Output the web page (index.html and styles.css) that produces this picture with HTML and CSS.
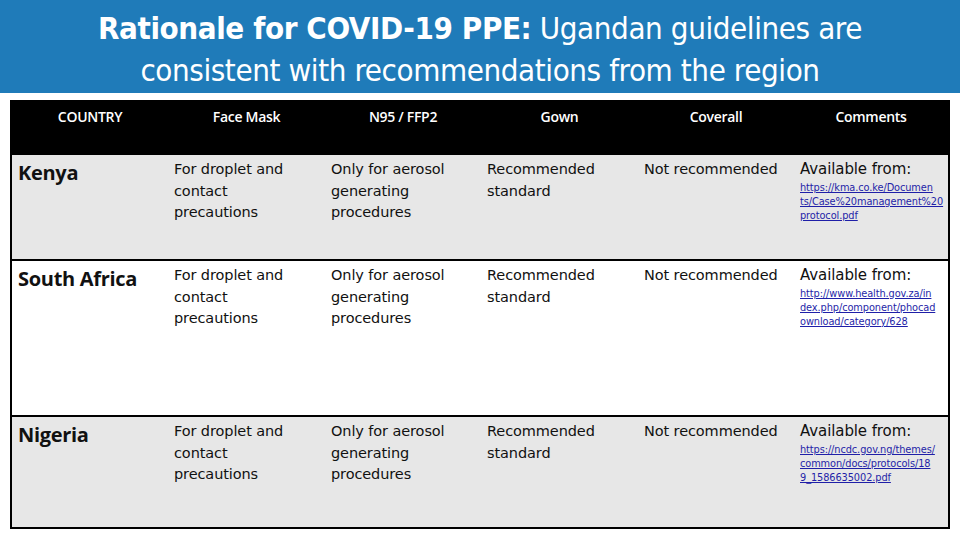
FILE: index.html
```html
<!DOCTYPE html>
<html>
<head>
<meta charset="utf-8">
<link rel="stylesheet" href="styles.css">
</head>
<body>
<header class="title-bar">
  <h1><b>Rationale for COVID-19 PPE:</b> Ugandan guidelines are<br>consistent with recommendations from the region</h1>
</header>
<main class="table">
  <div class="row head">
    <div class="cell">COUNTRY</div>
    <div class="cell">Face Mask</div>
    <div class="cell">N95 / FFP2</div>
    <div class="cell">Gown</div>
    <div class="cell">Coverall</div>
    <div class="cell">Comments</div>
  </div>
  <div class="row shade r1">
    <div class="cell country">Kenya</div>
    <div class="cell mask">For droplet and contact precautions</div>
    <div class="cell">Only for aerosol generating procedures</div>
    <div class="cell">Recommended standard</div>
    <div class="cell">Not recommended</div>
    <div class="cell comment">Available from:<a class="link">https://kma.co.ke/Documen<br>ts/Case%20management%20<br>protocol.pdf</a></div>
  </div>
  <div class="row r2">
    <div class="cell country">South Africa</div>
    <div class="cell mask">For droplet and contact precautions</div>
    <div class="cell">Only for aerosol generating procedures</div>
    <div class="cell">Recommended standard</div>
    <div class="cell">Not recommended</div>
    <div class="cell comment">Available from:<a class="link">http://www.health.gov.za/in<br>dex.php/component/phocad<br>ownload/category/628</a></div>
  </div>
  <div class="row shade r3">
    <div class="cell country">Nigeria</div>
    <div class="cell mask">For droplet and contact precautions</div>
    <div class="cell">Only for aerosol generating procedures</div>
    <div class="cell">Recommended standard</div>
    <div class="cell">Not recommended</div>
    <div class="cell comment">Available from:<a class="link">https://ncdc.gov.ng/themes/<br>common/docs/protocols/18<br>9_1586635002.pdf</a></div>
  </div>
</main>
</body>
</html>
```
FILE: styles.css
```css
html, body {
  margin: 0;
  padding: 0;
  background: #ffffff;
  width: 960px;
  height: 540px;
  overflow: hidden;
}
.title-bar {
  background: #1f7bb9;
  height: 93px;
  display: flex;
  align-items: center;
  justify-content: center;
}
.title-bar h1 {
  margin: 0;
  color: #ffffff;
  font-family: "DejaVu Sans Condensed", "Open Sans", sans-serif;
  font-stretch: condensed;
  font-weight: normal;
  font-size: 31px;
  line-height: 42px;
  text-align: center;
  letter-spacing: -0.4px;
  transform: translateY(2px);
}
.title-bar h1 b {
  font-weight: bold;
}
.table {
  margin: 7px 10px 0 10px;
  width: 936px;
  border: 2px solid #000;
  font-family: "DejaVu Sans", sans-serif;
}
.row {
  display: grid;
  grid-template-columns: 156px 157px 156px 157px 156px 154px;
}
.row + .row {
  border-top: 2px solid #000;
}
.head {
  background: #000;
  height: 51px;
}
.head .cell {
  color: #fff;
  text-align: center;
  font-family: "Open Sans", sans-serif;
  font-weight: 600;
  font-size: 14px;
  padding: 4px 0 0 0;
  letter-spacing: -0.3px;
}
.shade { background: #e7e7e7; }
.r1 { height: 104px; }
.r2 { height: 154px; }
.r3 { height: 110px; }
.cell {
  padding: 4px 4px 0 6px;
  font-size: 14.5px;
  line-height: 21.5px;
  color: #111;
  letter-spacing: -0.1px;
}
.mask {
  padding-right: 22px;
}
.country {
  font-size: 20px;
  font-weight: bold;
  font-family: "Open Sans", sans-serif;
  line-height: 28px;
  padding-top: 4px;
  letter-spacing: -0.3px;
}
.comment {
  font-size: 15px;
  padding-right: 2px;
}
.link {
  display: block;
  color: #1f1fa8;
  text-decoration: underline;
  font-size: 9.8px;
  line-height: 14px;
  white-space: nowrap;
  margin-top: 0;
  letter-spacing: -0.1px;
}
```
